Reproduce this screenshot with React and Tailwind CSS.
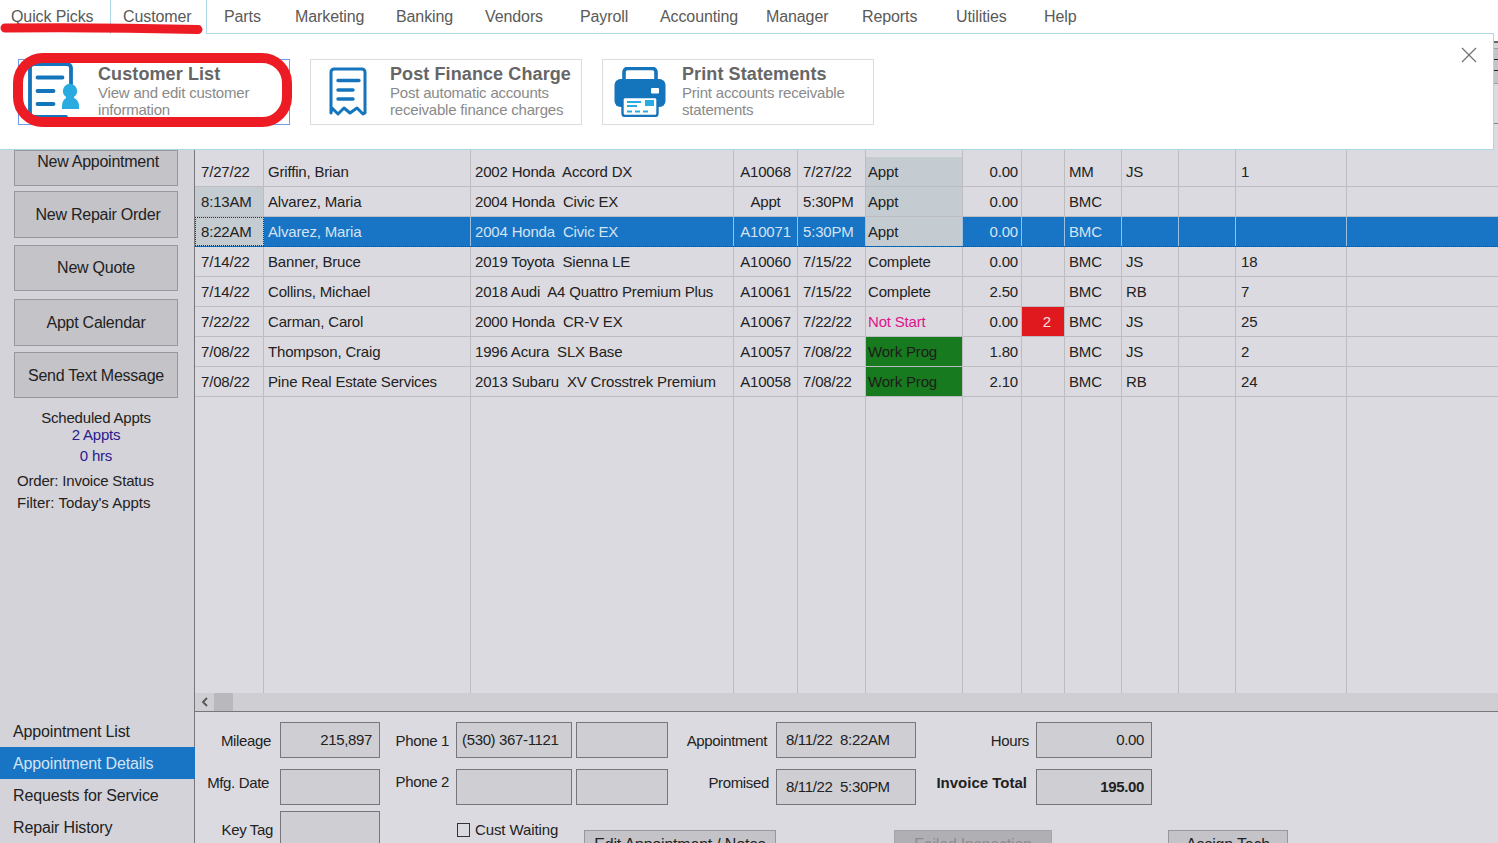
import React from "react";

function CustomerIcon() {
  return (
    <svg width="56" height="60" viewBox="0 0 56 60" className="shrink-0">
      <path d="M38 55H6a4 4 0 0 1-4-4V6a4 4 0 0 1 4-4h33a4 4 0 0 1 4 4v16" fill="none" stroke="#1474bc" strokeWidth="3.8" strokeLinecap="round" />
      <path d="M9.5 15.5h25M9.5 29h16M9.5 42h16" stroke="#1474bc" strokeWidth="3.8" strokeLinecap="round" fill="none" />
      <circle cx="42" cy="29" r="7.2" fill="#29abe2" />
      <path d="M34 47v-3c0-6 4-9 8-9s9 3 9 9v3z" fill="#29abe2" />
      <path d="M38 32h8v6h-8z" fill="#29abe2" />
    </svg>
  );
}

function ReceiptIcon() {
  return (
    <svg width="40" height="50" viewBox="0 0 40 50" className="shrink-0">
      <path d="M2 46V5a3 3 0 0 1 3-3h28a3 3 0 0 1 3 3v41l-2 1-6-6-7 5-6-5-6 6-6 -6z" fill="none" stroke="#1474bc" strokeWidth="3" strokeLinejoin="round" />
      <path d="M9 13.5h21M9 23h15M9 32h15" stroke="#1474bc" strokeWidth="3.4" strokeLinecap="round" fill="none" />
    </svg>
  );
}

function PrinterIcon() {
  return (
    <svg width="52" height="50" viewBox="0 0 52 50" className="shrink-0">
      <path d="M10 16V5a3.5 3.5 0 0 1 3.5-3.5h25A3.5 3.5 0 0 1 42 5v11" fill="none" stroke="#1474bc" strokeWidth="3.6" />
      <rect x="0.5" y="12" width="51" height="28" rx="6" fill="#1474bc" />
      <rect x="37" y="21" width="8" height="5.5" rx="1" fill="#fff" />
      <rect x="8.5" y="30" width="35" height="19" rx="2.5" fill="#fff" stroke="#1474bc" strokeWidth="2.4" />
      <path d="M13 35h14M13 39h10" stroke="#29abe2" strokeWidth="1.9" fill="none" />
      <rect x="31" y="33" width="9" height="6" fill="#29abe2" />
      <path d="M13 44.5h5M21 44.5h5M29 44.5h5" stroke="#29abe2" strokeWidth="2.2" fill="none" />
    </svg>
  );
}

function Card({ icon, title, sub, active, iconBox }) {
  return (
    <div className={`flex h-[66px] w-[272px] border ${active ? "border-[#6d9be6]" : "border-[#dcdcdc]"}`}>
      <div className={`flex shrink-0 items-center ${iconBox}`}>{icon}</div>
      <div className="flex flex-col pt-[4px]">
        <div className="text-[18px] leading-[20px] font-bold tracking-[0.1px] text-[#666666] whitespace-nowrap">{title}</div>
        <div className="text-[15px] leading-[17px] tracking-[-0.2px] text-[#8a8a8a]">
          {sub.map((s) => (
            <div key={s} className="whitespace-nowrap">{s}</div>
          ))}
        </div>
      </div>
    </div>
  );
}

const COLS = "grid grid-cols-[69px_207px_263px_64px_68px_97px_59px_43px_57px_57px_57px_111px_152px]";

const rows = [
  ["7/27/22", "Griffin, Brian", "2002 Honda  Accord DX", "A10068", "7/27/22", "Appt", "0.00", "", "MM", "JS", "", "1", ""],
  ["8:13AM", "Alvarez, Maria", "2004 Honda  Civic EX", "Appt", "5:30PM", "Appt", "0.00", "", "BMC", "", "", "", ""],
  ["8:22AM", "Alvarez, Maria", "2004 Honda  Civic EX", "A10071", "5:30PM", "Appt", "0.00", "", "BMC", "", "", "", ""],
  ["7/14/22", "Banner, Bruce", "2019 Toyota  Sienna LE", "A10060", "7/15/22", "Complete", "0.00", "", "BMC", "JS", "", "18", ""],
  ["7/14/22", "Collins, Michael", "2018 Audi  A4 Quattro Premium Plus", "A10061", "7/15/22", "Complete", "2.50", "", "BMC", "RB", "", "7", ""],
  ["7/22/22", "Carman, Carol", "2000 Honda  CR-V EX", "A10067", "7/22/22", "Not Start", "0.00", "2", "BMC", "JS", "", "25", ""],
  ["7/08/22", "Thompson, Craig", "1996 Acura  SLX Base", "A10057", "7/08/22", "Work Prog", "1.80", "", "BMC", "JS", "", "2", ""],
  ["7/08/22", "Pine Real Estate Services", "2013 Subaru  XV Crosstrek Premium", "A10058", "7/08/22", "Work Prog", "2.10", "", "BMC", "RB", "", "24", ""],
];

const align = [
  "pl-[6px]", "pl-[4px]", "pl-[4px]", "justify-center", "pl-[5px]", "pl-[2px]",
  "justify-end pr-[3px]", "justify-end pr-[13px]", "pl-[4px]", "pl-[4px]", "pl-[4px]", "pl-[5px]", "",
];

function Cell({ v, i, selected, r }) {
  let bg = "";
  let color = selected ? "text-[#d5e3f2]" : "text-[#222222]";
  let line = selected ? "border-r-[#9cbfe0]" : "border-r-[#bdbcc1]";
  let extra = "";
  if (i === 0 && (r === 1 || r === 2)) {
    bg = "bg-[#c4cbd1]";
    color = "text-[#222222]";
    if (selected) extra = "outline outline-1 -outline-offset-1 outline-dotted outline-[#333333]";
  }
  if (i === 0 && selected) line = "border-r-[#bdbcc1]";
  if (i === 5 && v === "Appt") {
    bg = "bg-[#c4cbd1]";
    color = "text-[#222222]";
  }
  if (i === 5 && v === "Not Start") color = "text-[#e0148c]";
  if (i === 5 && v === "Work Prog") {
    bg = "bg-[#187a1e]";
    color = "text-[#1c1c1c]";
  }
  if (i === 7 && v) {
    bg = "bg-[#e0191f]";
    color = "text-[#f0e0e0]";
  }
  return (
    <div className={`flex items-center whitespace-pre overflow-hidden pt-[1px] ${i < 12 ? "border-r" : ""} ${line} ${align[i]} ${bg} ${color} ${extra}`}>
      {v}
    </div>
  );
}

function Btn({ children, h, top, extra = "" }) {
  return (
    <div className={`ml-[14px] flex w-[164px] justify-center border border-[#98979c] bg-[#c4c3c8] text-[16px] tracking-[-0.25px] text-[#222222] ${h} ${top} ${extra}`}>
      {children}
    </div>
  );
}

function Field({ children, cls = "", h = "h-[36px]", extra = "" }) {
  return (
    <div className={`flex items-center border border-[#77777b] bg-[#cfced3] ${h} ${cls} ${extra}`}>
      {children}
    </div>
  );
}

function Label({ children, cls = "" }) {
  return <div className={`flex items-center justify-end whitespace-nowrap text-[#222222] ${cls}`}>{children}</div>;
}

export default function App() {
  return (
    <div
      className="relative flex h-[843px] w-[1498px] flex-col overflow-hidden bg-white text-[15px]"
      style={{ fontFamily: '"Liberation Sans", Arial, sans-serif' }}
    >
      {/* tabs */}
      <div className="flex h-[34px] shrink-0 items-stretch bg-white text-[16px] tracking-[-0.1px] text-[#5a5a5a]">
        <div className="w-[110px] pl-[11px] pt-[5px]">Quick Picks</div>
        <div className="w-[97px] border-x border-[#add8e6] pl-[12px] pt-[5px]">Customer</div>
        <div className="w-[88px] border-b border-[#add8e6] pl-[17px] pt-[5px]">Parts</div>
        <div className="w-[101px] border-b border-[#add8e6] pt-[5px]">Marketing</div>
        <div className="w-[89px] border-b border-[#add8e6] pt-[5px]">Banking</div>
        <div className="w-[95px] border-b border-[#add8e6] pt-[5px]">Vendors</div>
        <div className="w-[80px] border-b border-[#add8e6] pt-[5px]">Payroll</div>
        <div className="w-[106px] border-b border-[#add8e6] pt-[5px]">Accounting</div>
        <div className="w-[96px] border-b border-[#add8e6] pt-[5px]">Manager</div>
        <div className="w-[94px] border-b border-[#add8e6] pt-[5px]">Reports</div>
        <div className="w-[88px] border-b border-[#add8e6] pt-[5px]">Utilities</div>
        <div className="w-[450px] border-b border-[#add8e6] pt-[5px]">Help</div>
      </div>

      {/* ribbon */}
      <div className="flex h-[116px] shrink-0">
        <div className="relative flex w-[1494px] gap-[20px] border-r border-b border-[#add8e6] bg-white pl-[18px] pt-[25px]">
          <Card active icon={<CustomerIcon />} iconBox="w-[79px] pl-[9px]" title="Customer List" sub={["View and edit customer", "information"]} />
          <Card icon={<ReceiptIcon />} iconBox="w-[79px] pl-[18px]" title="Post Finance Charge" sub={["Post automatic accounts", "receivable finance charges"]} />
          <Card icon={<PrinterIcon />} iconBox="w-[79px] pl-[11px]" title="Print Statements" sub={["Print accounts receivable", "statements"]} />
          <svg width="16" height="16" viewBox="0 0 16 16" className="absolute right-[16px] top-[13px]">
            <path d="M1 1l14 14M15 1L1 15" stroke="#707070" strokeWidth="1.2" fill="none" />
          </svg>
        </div>
        <div className="flex flex-1 flex-col bg-white">
          <div className="h-[7px]" />
          <div className="h-[2px] bg-[#666666]" />
          <div className="h-[5px] bg-[#d6d5da]" />
          <div className="h-[1px] bg-[#a0a0a4]" />
          <div className="h-[10px] bg-[#c4c3c8]" />
          <div className="h-[1px] bg-[#222222]" />
          <div className="h-[10px] bg-[#c4c3c8]" />
          <div className="h-[1px] bg-[#222222]" />
          <div className="h-[12px] bg-[#c4c3c8]" />
          <div className="h-[1px] bg-[#a0a0a4]" />
          <div className="h-[39px] bg-[#dbdae0]" />
          <div className="h-[1px] bg-[#888888]" />
          <div className="flex-1 bg-[#dbdae0]" />
        </div>
      </div>

      {/* body */}
      <div className="flex min-h-0 flex-1">
        {/* sidebar */}
        <div className="flex w-[195px] shrink-0 flex-col border-r border-[#77777b] bg-[#d4d3d9] tracking-[-0.2px]">
          <Btn h="h-[36px]" top="mt-0" extra="items-start pl-[4px] leading-[22px]">New Appointment</Btn>
          <Btn h="h-[47px]" top="mt-[5px]" extra="items-center pl-[4px]">New Repair Order</Btn>
          <Btn h="h-[46px]" top="mt-[7px]" extra="items-center">New Quote</Btn>
          <Btn h="h-[47px]" top="mt-[8px]" extra="items-center">Appt Calendar</Btn>
          <Btn h="h-[46px]" top="mt-[6px]" extra="items-center pt-[2px]">Send Text Message</Btn>
          <div className="mt-[11px] pr-[2px] text-center leading-[17px] text-[#222222]">Scheduled Appts</div>
          <div className="pr-[2px] text-center leading-[17px] text-[#2a1a8c]">2 Appts</div>
          <div className="mt-[4px] pr-[2px] text-center leading-[17px] text-[#2a1a8c]">0 hrs</div>
          <div className="mt-[8px] pl-[17px] leading-[17px] text-[#222222]">Order: Invoice Status</div>
          <div className="mt-[5px] pl-[17px] leading-[17px] tracking-normal text-[#222222]">Filter: Today's Appts</div>
          <div className="mt-auto text-[16px] tracking-[-0.15px] text-[#222222]">
            <div className="flex h-[32px] items-center pl-[13px] pt-[1px]">Appointment List</div>
            <div className="-mr-px flex h-[32px] items-center bg-[#1874c4] pl-[13px] pt-[1px] text-[#d5e3f2]">Appointment Details</div>
            <div className="flex h-[32px] items-center pl-[13px] pt-[1px]">Requests for Service</div>
            <div className="flex h-[32px] items-center pl-[13px] pt-[1px]">Repair History</div>
          </div>
        </div>

        {/* main */}
        <div className="flex min-w-0 flex-1 flex-col bg-[#dbdae0]">
          <div className="flex h-[543px] shrink-0 flex-col text-[15px] tracking-[-0.18px]">
            <div className={`${COLS} h-[7px] shrink-0`}>
              {align.map((_, i) => (
                <div key={i} className={i < 12 ? "border-r border-r-[#bdbcc1]" : ""} />
              ))}
            </div>
            {rows.map((r, ri) => (
              <div
                key={ri}
                className={`${COLS} h-[30px] shrink-0 border-b ${ri === 2 ? "border-dotted border-b-[#444444] bg-[#1874c4]" : "border-b-[#bdbcc1]"}`}
              >
                {r.map((v, i) => (
                  <Cell key={i} v={v} i={i} r={ri} selected={ri === 2} />
                ))}
              </div>
            ))}
            <div className={`${COLS} min-h-0 flex-1`}>
              {align.map((_, i) => (
                <div key={i} className={i < 12 ? "border-r border-r-[#bdbcc1]" : ""} />
              ))}
            </div>
          </div>

          {/* scrollbar */}
          <div className="flex h-[19px] shrink-0 items-center border-b border-[#77777b] bg-[#cfced3]">
            <svg width="19" height="18" viewBox="0 0 19 18" className="shrink-0">
              <path d="M12 5l-4 4 4 4" fill="none" stroke="#555555" strokeWidth="1.8" />
            </svg>
            <div className="h-[18px] w-[19px] bg-[#b9b8bc]" />
          </div>

          {/* detail pane */}
          <div className="grid grid-cols-[85px_100px_76px_116px_4px_92px_108px_140px_120px_116px] grid-rows-[36px_47px_46px] pt-[10px] tracking-[-0.35px] text-[#222222]">
            <Label cls="pr-[9px] pt-[2px]">Mileage</Label>
            <Field cls="justify-end pr-[7px]">215,897</Field>
            <Label cls="pr-[7px] pt-[2px]">Phone 1</Label>
            <Field cls="pl-[5px]">(530) 367-1121</Field>
            <div />
            <Field />
            <Label cls="pr-[9px] pt-[2px]">Appointment</Label>
            <Field cls="pl-[9px]">8/11/22&nbsp;&nbsp;8:22AM</Field>
            <Label cls="pr-[7px] pt-[2px]">Hours</Label>
            <Field cls="justify-end pr-[7px]">0.00</Field>

            <Label cls="mt-[11px] pb-[8px] pr-[11px]">Mfg. Date</Label>
            <Field extra="mt-[11px]" />
            <Label cls="mt-[11px] pb-[10px] pr-[7px]">Phone 2</Label>
            <Field extra="mt-[11px]" />
            <div />
            <Field extra="mt-[11px]" />
            <Label cls="mt-[11px] pb-[8px] pr-[7px]">Promised</Label>
            <Field extra="mt-[11px]" cls="pl-[9px]">8/11/22&nbsp;&nbsp;5:30PM</Field>
            <Label cls="mt-[11px] pb-[8px] pr-[9px] font-bold tracking-normal">Invoice Total</Label>
            <Field extra="mt-[11px]" cls="justify-end pr-[7px] font-bold">195.00</Field>

            <Label cls="mt-[6px] items-start pt-[8px] pr-[7px]">Key Tag</Label>
            <Field h="h-[40px]" extra="mt-[6px]" />
            <div />
            <div className="col-span-7 mt-[6px] flex items-start">
              <div className="mt-[12px] ml-[1px] h-[14px] w-[13px] shrink-0 border border-[#333333] bg-[#dbdae0]" />
              <div className="mt-[8px] ml-[5px] w-[109px] shrink-0 whitespace-nowrap tracking-[-0.1px]">Cust Waiting</div>
              <div className="mt-[19px] h-[40px] w-[192px] shrink-0 border border-[#98979c] bg-[#c4c3c8] pt-[2px] text-center text-[16px] tracking-[-0.2px]">Edit Appointment / Notes</div>
              <div className="mt-[19px] ml-[118px] h-[40px] w-[158px] shrink-0 border border-[#a5a4a9] bg-[#b0afb4] pt-[2px] text-center text-[16px] tracking-[-0.2px] text-[#8c8b90]">Failed Inspection</div>
              <div className="mt-[19px] ml-[116px] h-[40px] w-[120px] shrink-0 border border-[#98979c] bg-[#c4c3c8] pt-[2px] text-center text-[16px] tracking-[-0.2px]">Assign Tech</div>
            </div>
          </div>
        </div>
      </div>

      {/* hand-drawn annotation */}
      <div className="pointer-events-none absolute left-[13px] top-[53px] h-[74px] w-[279px] rounded-[30px] border-[10px] border-[#ed1c24]" />
      <svg width="210" height="40" viewBox="0 0 210 40" className="pointer-events-none absolute left-0 top-0">
        <path d="M5 28 Q100 27 198 29.5" fill="none" stroke="#ed1c24" strokeWidth="9" strokeLinecap="round" />
      </svg>
    </div>
  );
}
